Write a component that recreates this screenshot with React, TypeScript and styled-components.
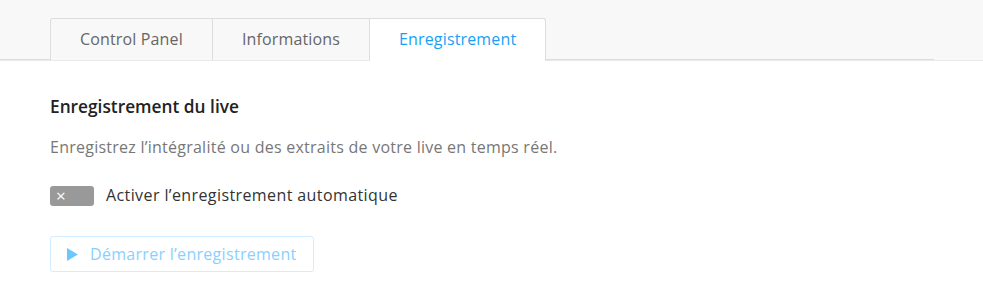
import React, { useState } from 'react';
import styled, { createGlobalStyle } from 'styled-components';

const GlobalStyle = createGlobalStyle`
  html, body {
    margin: 0;
    padding: 0;
    background: #fff;
  }
  body {
    font-family: 'Open Sans', 'Noto Sans', sans-serif;
    -webkit-font-smoothing: antialiased;
  }
`;

const tabs = ['Control Panel', 'Informations', 'Enregistrement'];

const App: React.FC = () => {
  const [active, setActive] = useState(2);
  const [autoRecord, setAutoRecord] = useState(false);

  return (
    <Page>
      <GlobalStyle />
      <Header>
        <TabList>
          {tabs.map((label, i) => (
            <Tab key={label} $active={i === active} onClick={() => setActive(i)}>
              {label}
            </Tab>
          ))}
        </TabList>
      </Header>
      <Content>
        <Title>Enregistrement du live</Title>
        <Description>Enregistrez l’intégralité ou des extraits de votre live en temps réel.</Description>
        <ToggleRow>
          <Toggle $on={autoRecord} onClick={() => setAutoRecord(!autoRecord)}>
            {autoRecord ? '✓' : '×'}
          </Toggle>
          <ToggleLabel>Activer l’enregistrement automatique</ToggleLabel>
        </ToggleRow>
        <StartButton disabled>
          <svg width="11" height="13" viewBox="0 0 11 13">
            <path d="M0 0 L11 6.5 L0 13 Z" fill="currentColor" />
          </svg>
          Démarrer l’enregistrement
        </StartButton>
      </Content>
    </Page>
  );
};

export default App;

const Page = styled.div`
  width: 100%;
`;

const Header = styled.div`
  background: #f8f8f8;
  padding: 18px 0 0 0;
  border-bottom: 1px solid #eaeaea;
  background-image: linear-gradient(#ddd, #ddd);
  background-size: 934px 1px;
  background-position: left bottom;
  background-repeat: no-repeat;
`;

const TabList = styled.div`
  display: flex;
  margin-left: 50px;
`;

const Tab = styled.div<{ $active: boolean }>`
  display: flex;
  align-items: center;
  justify-content: center;
  box-sizing: border-box;
  padding: 0 29px 2px;
  font-size: 16px;
  letter-spacing: 0.15px;
  color: ${(p) => (p.$active ? '#1a9ff5' : '#666')};
  background: ${(p) => (p.$active ? '#fff' : '#f8f8f8')};
  border: 1px solid #ddd;
  border-bottom: none;
  margin-bottom: ${(p) => (p.$active ? '-1px' : '0')};
  height: ${(p) => (p.$active ? '43px' : '42px')};
  cursor: pointer;
  & + & {
    border-left: none;
  }
  &:first-child {
    border-top-left-radius: 3px;
  }
  &:last-child {
    border-top-right-radius: 3px;
  }
`;

const Content = styled.div`
  padding: 34px 50px 0;
`;

const Title = styled.h2`
  margin: 0;
  font-size: 17.3px;
  font-weight: 600;
  color: #222;
  line-height: 24px;
`;

const Description = styled.p`
  margin: 16px 0 0;
  font-size: 16px;
  letter-spacing: 0.25px;
  color: #777;
  line-height: 24px;
`;

const ToggleRow = styled.div`
  display: flex;
  align-items: center;
  gap: 12px;
  margin-top: 27px;
`;

const Toggle = styled.div<{ $on: boolean }>`
  width: 44px;
  height: 20px;
  border-radius: 3px;
  background: ${(p) => (p.$on ? '#1a9ff5' : '#999')};
  color: #fff;
  font-size: 17px;
  line-height: 20px;
  box-sizing: border-box;
  padding-left: 6px;
  cursor: pointer;
`;

const ToggleLabel = styled.span`
  font-size: 16px;
  letter-spacing: 0.4px;
  color: #333;
  margin-top: -3px;
`;

const StartButton = styled.button`
  margin-top: 30px;
  display: inline-flex;
  align-items: center;
  gap: 12px;
  height: 36px;
  padding: 0 16px 0 16px;
  border: 1px solid #d2edff;
  border-radius: 3px;
  background: #fff;
  color: #8ad0ff;
  font-family: inherit;
  font-size: 16px;
  letter-spacing: 0.3px;
  svg {
    color: #6fc6ff;
  }
`;
